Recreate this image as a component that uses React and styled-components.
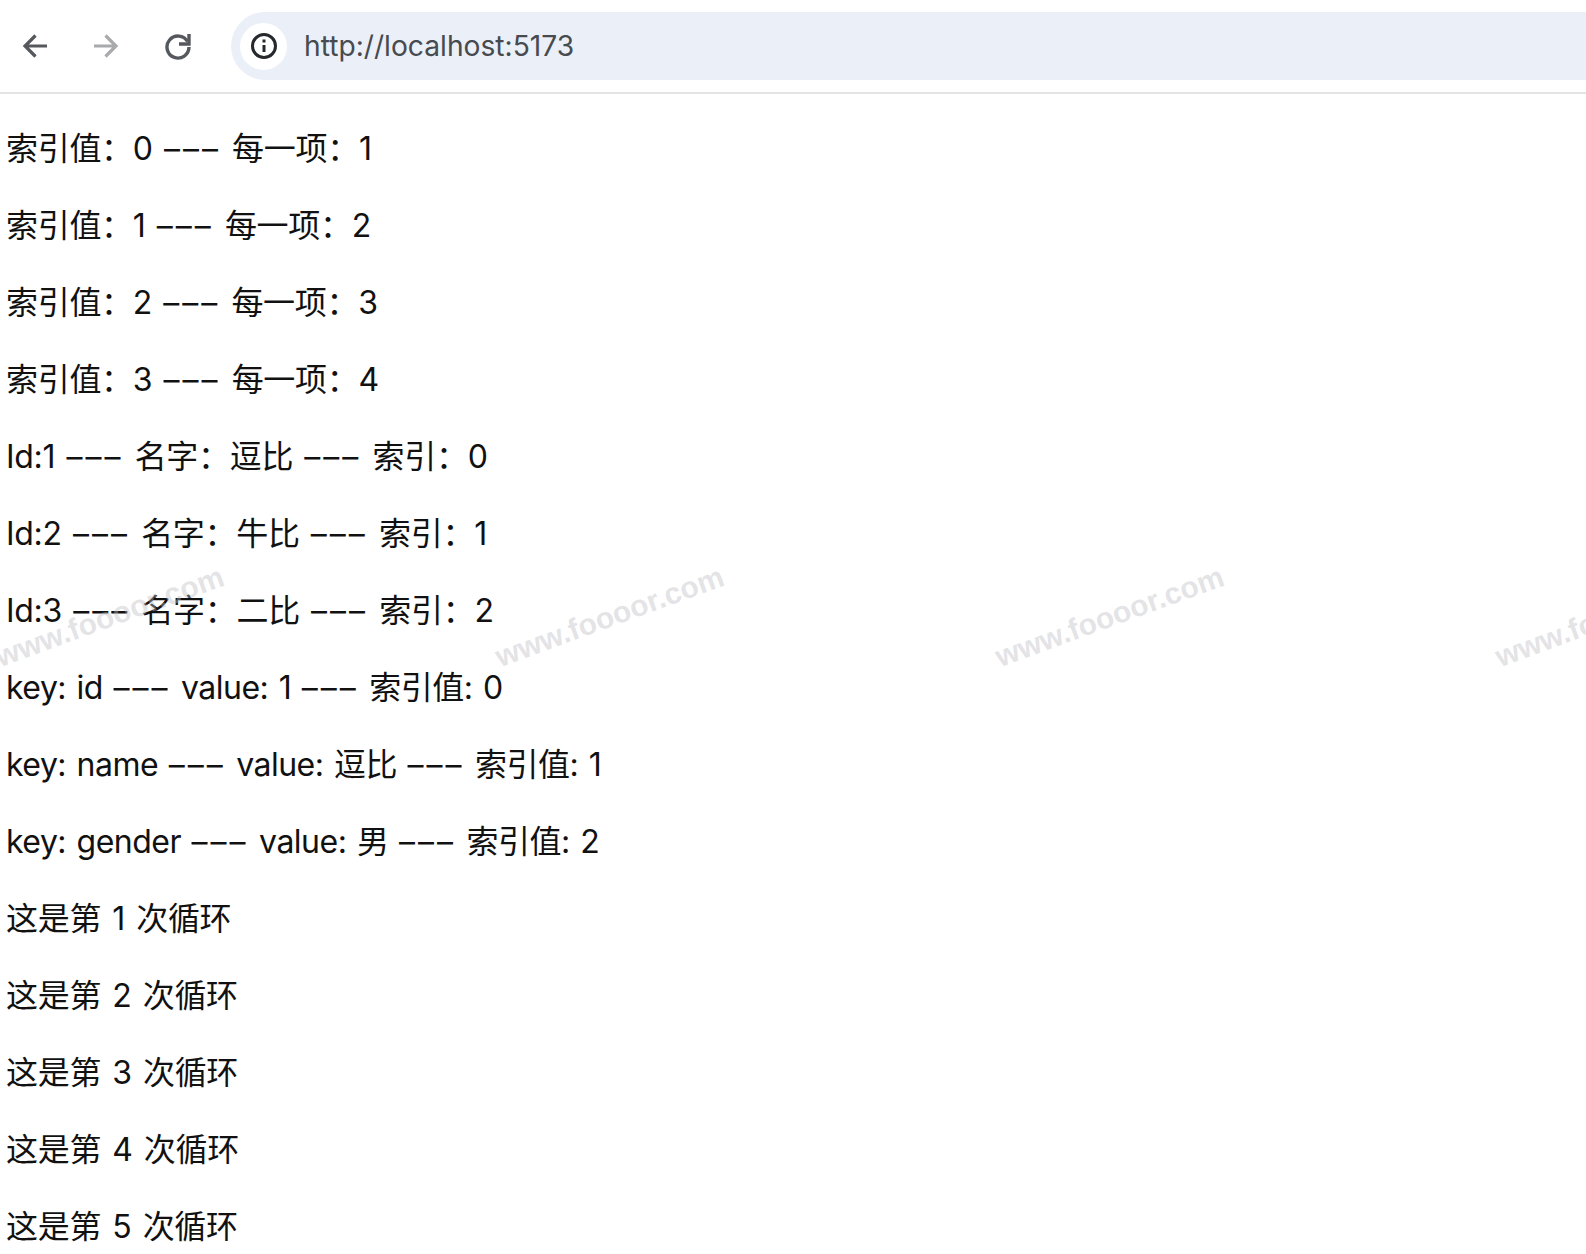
import styled, { createGlobalStyle } from 'styled-components'

const GlobalStyle = createGlobalStyle`
  html, body {
    margin: 0;
    padding: 0;
    background: #fff;
    overflow: hidden;
  }
`;

const Page = styled.div`
  position: relative;
  width: 1586px;
  height: 1254px;
  overflow: hidden;
  font-family: Inter, "Noto Sans CJK SC", sans-serif;
  color: #111;
`;

const Toolbar = styled.div`
  height: 92px;
  display: flex;
  align-items: center;
  padding-left: 22px;
  border-bottom: 2px solid #e4e4e6;
  box-sizing: content-box;
`;

const NavButton = styled.div`
  width: ${props => props.$size}px;
  height: ${props => props.$size}px;
  margin-right: ${props => props.$gap}px;
  color: ${props => props.$color};
  display: flex;
`;

const Omnibox = styled.div`
  flex: 1;
  height: 68px;
  display: flex;
  align-items: center;
  gap: 17px;
  padding-left: 9px;
  background: #ebeff7;
  border-radius: 34px 0 0 34px;
`;

const InfoBadge = styled.div`
  width: 47px;
  height: 47px;
  border-radius: 50%;
  background: #fff;
  display: flex;
  align-items: center;
  justify-content: center;
  color: #26282b;
`;

const Url = styled.span`
  font-size: 28.2px;
  color: #474a4f;
`;

const List = styled.div`
  padding: 32px 0 0 6px;
`;

const Row = styled.p`
  margin: 0 0 32px;
  height: 45px;
  line-height: 45px;
  font-size: 32px;
  letter-spacing: ${props => props.$tight ? '-0.5px' : '-0.3px'};
  word-spacing: ${props => props.$tight ? '2px' : '2.5px'};
  white-space: nowrap;
`;

const Dash = styled.span`
  letter-spacing: 3px;
`;

const Watermarks = styled.div`
  position: absolute;
  top: 598px;
  left: -11px;
  display: flex;
  gap: 250px;
  pointer-events: none;
`;

const Watermark = styled.span`
  flex: none;
  width: 250px;
  font-family: "Liberation Sans", sans-serif;
  font-size: 30px;
  font-weight: 700;
  white-space: nowrap;
  color: rgba(190, 190, 195, 0.42);
  transform: rotate(-20deg);
`;

const rows = [
  ['索引值：0 ', ' 每一项：1'],
  ['索引值：1 ', ' 每一项：2'],
  ['索引值：2 ', ' 每一项：3'],
  ['索引值：3 ', ' 每一项：4'],
  ['Id:1 ', ' 名字：逗比 ', ' 索引：0'],
  ['Id:2 ', ' 名字：牛比 ', ' 索引：1'],
  ['Id:3 ', ' 名字：二比 ', ' 索引：2'],
  ['key: id ', ' value: 1 ', ' 索引值: 0'],
  ['key: name ', ' value: 逗比 ', ' 索引值: 1'],
  ['key: gender ', ' value: 男 ', ' 索引值: 2'],
  ['这是第 1 次循环'],
  ['这是第 2 次循环'],
  ['这是第 3 次循环'],
  ['这是第 4 次循环'],
  ['这是第 5 次循环'],
]

const Arrow = ({ flip }) => (
  <svg width="26" height="26" viewBox="0 0 26 26" fill="none" stroke="currentColor" strokeWidth="3.2"
    style={flip ? { transform: 'scaleX(-1)' } : undefined}>
    <path d="M25 13H3M13.5 2.5L3 13l10.5 10.5" />
  </svg>
)

const Reload = () => (
  <svg width="28" height="28" viewBox="0 0 28 28" fill="none" stroke="currentColor" strokeWidth="3.4">
    <path d="M23.5 9.5A11 11 0 1 0 25 15" />
    <path d="M25 2v10h-10" />
  </svg>
)

const Info = () => (
  <svg width="26" height="26" viewBox="0 0 26 26" fill="none" stroke="currentColor" strokeWidth="3">
    <circle cx="13" cy="13" r="11.5" />
    <path d="M13 12v7" />
    <path d="M13 6.5v3" />
  </svg>
)

const App = () => (
  <Page>
    <GlobalStyle />
    <Toolbar>
      <NavButton $size={26} $gap={45} $color="#55585c"><Arrow /></NavButton>
      <NavButton $size={26} $gap={45} $color="#a8aaad"><Arrow flip /></NavButton>
      <NavButton $size={28} $gap={39} $color="#55585c"><Reload /></NavButton>
      <Omnibox>
        <InfoBadge><Info /></InfoBadge>
        <Url>http://localhost:5173</Url>
      </Omnibox>
    </Toolbar>
    <List>
      {rows.map(parts => (
        <Row key={parts.join()} $tight={parts[0].startsWith('key')}>
          {parts.map((part, index) => (
            <span key={index}>
              {index > 0 && <Dash>–––</Dash>}
              {part}
            </span>
          ))}
        </Row>
      ))}
    </List>
    <Watermarks>
      {[0, 1, 2, 3].map(n => <Watermark key={n}>www.foooor.com</Watermark>)}
    </Watermarks>
  </Page>
)

export default App
